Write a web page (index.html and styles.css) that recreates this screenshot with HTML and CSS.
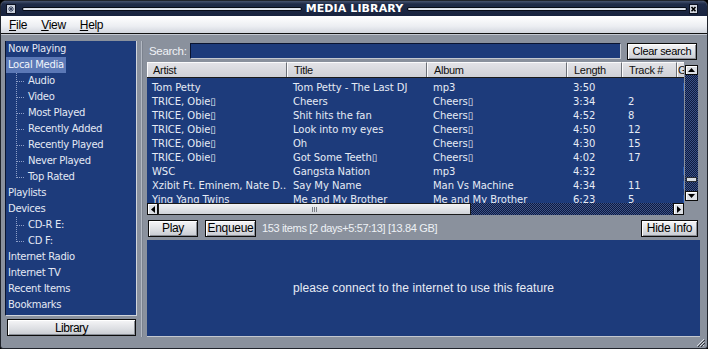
FILE: index.html
```html
<!DOCTYPE html>
<html lang="en">
<head>
  <meta charset="UTF-8"/>
  <meta name="viewport" content="width=device-width, initial-scale=1.0"/>
  <title>Media Library</title>
  <link rel="stylesheet" href="styles.css">
</head>
<body>

<div class="window">

  <!-- Title bar -->
  <div class="titlebar">
    <div class="sys-icon">
      <svg width="10" height="10" viewBox="0 0 10 10"><rect x="0.5" y="0.5" width="9" height="9" fill="#c9d0dc" stroke="#0b1020"/><path d="M3 3l4 4M7 3l-4 4M5 2v6M2 5h6" stroke="#3a4560" stroke-width="1"/></svg>
    </div>
    <div class="groove"></div>
    <div class="title">MEDIA LIBRARY</div>
    <div class="groove"></div>
    <div class="close-btn">
      <svg width="9" height="10" viewBox="0 0 9 10"><rect x="0.5" y="0.5" width="8" height="9" fill="#d4d8e0" stroke="#0b1020"/><path d="M2.5 3l4 4.2M6.5 3l-4 4.2" stroke="#000" stroke-width="1.6"/></svg>
    </div>
  </div>

  <!-- Menu -->
  <div class="menubar">
    <span class="menu-item"><u>F</u>ile</span>
    <span class="menu-item"><u>V</u>iew</span>
    <span class="menu-item"><u>H</u>elp</span>
  </div>

  <div class="frame">

    <!-- Left tree -->
    <div class="sidebar">
      <div class="tree">
        <div class="node"><span>Now Playing</span></div>
        <div class="node"><span class="selected">Local Media</span></div>
        <div class="node sub"><span>Audio</span></div>
        <div class="node sub"><span>Video</span></div>
        <div class="node sub"><span>Most Played</span></div>
        <div class="node sub"><span>Recently Added</span></div>
        <div class="node sub"><span>Recently Played</span></div>
        <div class="node sub"><span>Never Played</span></div>
        <div class="node sub last"><span>Top Rated</span></div>
        <div class="node"><span>Playlists</span></div>
        <div class="node"><span>Devices</span></div>
        <div class="node sub"><span>CD-R E:</span></div>
        <div class="node sub last"><span>CD F:</span></div>
        <div class="node"><span>Internet Radio</span></div>
        <div class="node"><span>Internet TV</span></div>
        <div class="node"><span>Recent Items</span></div>
        <div class="node"><span>Bookmarks</span></div>
      </div>
      <div class="btn lib-btn">Library</div>
    </div>

    <div class="splitter"></div>

    <!-- Right content -->
    <div class="content">
      <div class="search-row">
        <span class="search-label">Search:</span>
        <div class="search-input"></div>
        <div class="btn clear-btn">Clear search</div>
      </div>

      <div class="listview">
        <div class="list-top">
          <div class="list-main">
            <div class="row list-header">
              <div class="cell">Artist</div>
              <div class="cell">Title</div>
              <div class="cell">Album</div>
              <div class="cell">Length</div>
              <div class="cell">Track #</div>
              <div class="cell genre">Genre</div>
            </div>
            <div class="list-body" id="rows"></div>
          </div>
          <div class="vscroll">
            <div class="sb-btn">
              <svg width="7" height="4" viewBox="0 0 7 4"><path d="M0 4L3.5 0L7 4Z" fill="#000"/></svg>
            </div>
            <div class="vtrack"><div class="vthumb"></div></div>
            <div class="sb-btn">
              <svg width="7" height="4" viewBox="0 0 7 4"><path d="M0 0L3.5 4L7 0Z" fill="#000"/></svg>
            </div>
          </div>
        </div>
        <div class="list-bottom">
          <div class="hscroll">
            <div class="sb-btn">
              <svg width="4" height="7" viewBox="0 0 4 7"><path d="M4 0L0 3.5L4 7Z" fill="#000"/></svg>
            </div>
            <div class="hthumb"><span class="grip"></span></div>
            <div class="htrack"></div>
            <div class="sb-btn">
              <svg width="4" height="7" viewBox="0 0 4 7"><path d="M0 0L4 3.5L0 7Z" fill="#000"/></svg>
            </div>
          </div>
          <div class="corner"></div>
        </div>
      </div>

      <div class="status-row">
        <div class="btn play-btn">Play</div>
        <div class="btn enqueue-btn">Enqueue</div>
        <span class="status-text">153 items [2 days+5:57:13] [13.84 GB]</span>
        <div class="btn hide-btn">Hide Info</div>
      </div>

      <div class="info-panel">please connect to the internet to use this feature</div>
    </div>
  </div>

  <div class="grip-corner">
    <svg width="10" height="10" viewBox="0 0 10 10"><path d="M9 2L2 9M9 5L5 9M9 8L8 9" stroke="#d8dce4" stroke-width="1"/><path d="M10 3L3 10M10 6L6 10" stroke="#30343a" stroke-width="1"/></svg>
  </div>
</div>

<script>
  const tracks = [
    { artist: 'Tom Petty', title: 'Tom Petty - The Last DJ', album: 'mp3', length: '3:50', track: '', genre: 'Rock' },
    { artist: 'TRICE, Obie\u25AF', title: 'Cheers', album: 'Cheers\u25AF', length: '3:34', track: '2', genre: '' },
    { artist: 'TRICE, Obie\u25AF', title: 'Shit hits the fan', album: 'Cheers\u25AF', length: '4:52', track: '8', genre: '' },
    { artist: 'TRICE, Obie\u25AF', title: 'Look into my eyes', album: 'Cheers\u25AF', length: '4:50', track: '12', genre: '' },
    { artist: 'TRICE, Obie\u25AF', title: 'Oh', album: 'Cheers\u25AF', length: '4:30', track: '15', genre: '' },
    { artist: 'TRICE, Obie\u25AF', title: 'Got Some Teeth\u25AF', album: 'Cheers\u25AF', length: '4:02', track: '17', genre: '' },
    { artist: 'WSC', title: 'Gangsta Nation', album: 'mp3', length: '4:32', track: '', genre: 'Rap' },
    { artist: 'Xzibit Ft. Eminem, Nate D...', title: 'Say My Name', album: 'Man Vs Machine', length: '4:34', track: '11', genre: 'Rap' },
    { artist: 'Ying Yang Twins', title: 'Me and My Brother', album: 'Me and My Brother', length: '6:23', track: '5', genre: 'Rap' }
  ];

  const body = document.getElementById('rows');
  tracks.forEach(t => {
    const row = document.createElement('div');
    row.className = 'row';
    row.innerHTML = `
      <div class="cell">${t.artist}</div>
      <div class="cell">${t.title}</div>
      <div class="cell">${t.album}</div>
      <div class="cell">${t.length}</div>
      <div class="cell">${t.track}</div>
      <div class="cell">${t.genre}</div>
    `;
    body.appendChild(row);
  });
</script>

</body>
</html>
```

FILE: styles.css
```css
* { box-sizing: border-box; }
body { margin: 0; background: #000; font-family: "DejaVu Sans", Verdana, sans-serif; }

.window {
  position: relative;
  width: 708px;
  height: 349px;
  display: flex;
  flex-direction: column;
  background: #8a919d;
  border: 1px solid #20242c;
  border-radius: 6px 6px 3px 3px;
  overflow: hidden;
}

/* title bar */
.titlebar {
  height: 15px;
  flex: none;
  display: flex;
  align-items: center;
  padding: 0 9px 0 5px;
  background: linear-gradient(#46536f 0, #1f2b48 3px, #18233e 100%);
}
.sys-icon, .close-btn { display: flex; }
.sys-icon svg, .close-btn svg { display: block; }
.groove {
  flex: 1;
  height: 4px;
  margin: 0 4px 0 6px;
  background: linear-gradient(#b8c2d6, #ffffff 50%, #c4ccdc);
  border: 1px solid #070b16;
  border-radius: 2px;
}
.title + .groove { margin: 0 2px 0 4px; }
.title {
  color: #fff;
  font-weight: bold;
  font-size: 11px;
  letter-spacing: 0.1px;
  line-height: 15px;
}

/* menu */
.menubar {
  height: 18px;
  flex: none;
  display: flex;
  align-items: center;
  padding-left: 1px;
  background: linear-gradient(#ffffff, #eceef2 60%, #d2d6de);
  border-bottom: 1px solid #111;
}
.menu-item {
  padding: 0 7px;
  font-family: "Liberation Sans", Arial, sans-serif;
  font-size: 12px;
  letter-spacing: -0.3px;
  color: #000;
}
.menu-item u { text-decoration-thickness: 1px; text-underline-offset: 1px; }

/* frame */
.frame {
  flex: 1;
  min-height: 0;
  display: flex;
  padding: 6px 7px 11px 4px;
  border-top: 1px solid #c3c8d2;
}

/* sidebar */
.sidebar { width: 132px; flex: none; display: flex; flex-direction: column; }
.tree {
  flex: 1;
  background: #1d3b7b;
  border: 1px solid #0a1430;
  border-top: 0;
  border-right-color: #d0d4dc;
  border-bottom-color: #d0d4dc;
  font-size: 10px;
  letter-spacing: -0.3px;
  color: #e4e9f4;
}
.node {
  height: 16px;
  line-height: 15px;
  white-space: nowrap;
}
.node span { padding: 0 2px 1px; }
.node .selected { background: #5b78b6; color: #f0f4fb; display: inline-block; height: 16px; }
.node.sub {
  padding-left: 20px;
  background-image:
    repeating-linear-gradient(to bottom, #8e9fc8 0 1px, transparent 1px 2px),
    repeating-linear-gradient(to right, #8e9fc8 0 1px, transparent 1px 2px);
  background-size: 1px 100%, 8px 1px;
  background-position: 10px 0, 11px 8px;
  background-repeat: no-repeat;
}
.node.sub.last { background-size: 1px 9px, 8px 1px; }

.btn {
  display: flex;
  align-items: center;
  justify-content: center;
  flex: none;
  background: linear-gradient(#f6f6f8, #dcdee2 60%, #c8cbd2);
  border: 1px solid #0c0c0c;
  box-shadow: inset 1px 1px #ffffff, inset -1px -1px #8a8e96;
  font-family: "Liberation Sans", Arial, sans-serif;
  font-size: 11px;
  letter-spacing: -0.3px;
  color: #000;
  white-space: nowrap;
}
.lib-btn { height: 17px; margin: 3px 1px 1px 2px; font-size: 12px; letter-spacing: -0.5px; }

.splitter {
  width: 9px;
  flex: none;
  background: linear-gradient(to right, #8a919d 4px, #b4bac4 4px 5px, #7c838f 5px 6px, #8a919d 6px);
}

/* content */
.content { flex: 1; min-width: 0; display: flex; flex-direction: column; }

.search-row {
  height: 20px;
  flex: none;
  display: flex;
  align-items: center;
  padding: 0 3px 0 3px;
}
.search-label {
  font-family: "Liberation Sans", Arial, sans-serif;
  font-size: 11.5px;
  letter-spacing: -0.3px;
  color: #f0f2f6;
  width: 41px;
  flex: none;
}
.search-input {
  flex: 1;
  height: 16px;
  background: #1d3b7b;
  border: 1px solid #0a1430;
  border-right-color: #c4c8d0;
  border-bottom-color: #c4c8d0;
}
.clear-btn { width: 70px; height: 17px; margin-left: 6px; }

/* list */
.listview { margin: 1px 2px 0 1px; height: 153px; flex: none; display: flex; flex-direction: column; min-width: 0; }
.list-top { flex: 1; display: flex; min-height: 0; }
.list-main { flex: 1; min-width: 0; display: flex; flex-direction: column; overflow: hidden; background: #1d3b7b; }

.row {
  display: grid;
  grid-template-columns: 140px 140px 140px 55px 55px 100px;
  height: 14px;
  line-height: 14px;
  font-size: 10px;
  letter-spacing: -0.05px;
  color: #e6ebf5;
  white-space: nowrap;
}
.cell { overflow: hidden; padding-left: 6px; }
.cell:first-child { padding-left: 5px; }

.list-header {
  height: 16px;
  flex: none;
  line-height: 14px;
  background: linear-gradient(#e4e4e8, #cfd0d6);
  border-bottom: 1px solid #1a1a1a;
  font-family: "Liberation Sans", Arial, sans-serif;
  font-size: 11px;
  letter-spacing: -0.3px;
  color: #111;
}
.list-header .cell {
  border-left: 1px solid #fbfbfc;
  border-right: 1px solid #6c7078;
  border-top: 1px solid #fbfbfc;
}
.list-header .genre { padding-left: 0; }

.list-body { flex: 1; overflow: hidden; padding-top: 3px; }

.vscroll {
  width: 13px;
  flex: none;
  margin-left: 1px;
  display: flex;
  flex-direction: column;
  padding: 3px 0 2px;
}
.sb-btn {
  width: 12px;
  height: 10px;
  flex: none;
  display: flex;
  align-items: center;
  justify-content: center;
  background: #dcdfe4;
  border: 1px solid #0c0c0c;
  box-shadow: inset 1px 1px #fff;
}
.vscroll .sb-btn { width: 13px; }
.vtrack {
  flex: 1;
  display: flex;
  flex-direction: column;
  justify-content: flex-end;
  padding-bottom: 9px;
  background: repeating-conic-gradient(#0e1b3e 0 25%, #3b5188 0 50%) 0 0 / 2px 2px;
}
.vthumb {
  height: 5px;
  margin: 0 1px;
  background: #d8dce2;
  border: 1px solid #2a2e36;
}

.list-bottom { height: 12px; flex: none; display: flex; }
.hscroll { flex: 1; min-width: 0; display: flex; }
.hscroll .sb-btn { height: 12px; width: 11px; }
.hthumb {
  width: 313px;
  flex: none;
  display: flex;
  align-items: center;
  justify-content: center;
  background: linear-gradient(#f2f3f5, #d0d3d8);
  border: 1px solid #1a1a1a;
}
.grip {
  width: 5px;
  height: 5px;
  background: repeating-linear-gradient(to right, #7a7e86 0 1px, transparent 1px 2px);
}
.htrack { flex: 1; background: repeating-conic-gradient(#0e1b3e 0 25%, #3b5188 0 50%) 0 0 / 2px 2px; }
.corner { width: 14px; flex: none; }

/* status */
.status-row {
  height: 25px;
  flex: none;
  display: flex;
  align-items: center;
  padding: 1px 2px 0 2px;
}
.play-btn { width: 50px; height: 17px; font-size: 12px; }
.enqueue-btn { width: 51px; height: 17px; margin-left: 7px; font-size: 12px; }
.status-text {
  margin-left: 6px;
  font-family: "Liberation Sans", Arial, sans-serif;
  font-size: 11px;
  letter-spacing: -0.35px;
  color: #eef1f6;
  white-space: nowrap;
}
.hide-btn { width: 57px; height: 17px; margin-left: auto; font-size: 12px; }

.info-panel {
  flex: 1;
  margin-left: 1px;
  display: flex;
  align-items: center;
  justify-content: center;
  background: #1d3b7b;
  border-bottom: 1px solid #c4c8d0;
  font-family: "Liberation Sans", Arial, sans-serif;
  font-size: 12px;
  letter-spacing: 0.1px;
  color: #e8ecf5;
}

.grip-corner { position: absolute; right: 2px; bottom: 1px; display: flex; }
```
